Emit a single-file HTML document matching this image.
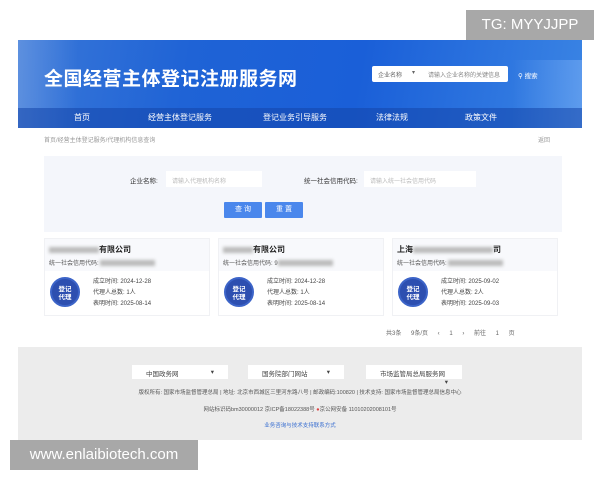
<!DOCTYPE html>
<html><head><meta charset="utf-8"><style>
*{margin:0;padding:0;box-sizing:border-box}
body{width:600px;height:480px;background:#fff;position:relative;overflow:hidden;font-family:"Liberation Sans","Noto Sans CJK SC",sans-serif;color:#333}
.abs{position:absolute}
.hdr{left:18px;top:40px;width:564px;height:88px;background:linear-gradient(100deg,#3a78d8 0%,#1f63d6 30%,#1a5fd8 60%,#3a84e4 100%);overflow:hidden}
.nav{left:0;top:68px;width:564px;height:20px;background:rgba(20,70,170,.55)}
.nav span{position:absolute;top:4px;color:#fff;font-size:8px}
.title{left:26px;top:24px;color:#fff;font-size:19px;font-weight:bold;letter-spacing:.5px}
.sbox{left:354px;top:26px;width:136px;height:16px;background:#fff;border-radius:2px;font-size:6px;color:#666}
.small{font-size:6px;color:#999}
.panel{left:44px;top:156px;width:518px;height:76px;background:#f4f6fb}
.inp{background:#fff;height:16px;font-size:6px;color:#bbb;padding:5px 6px}
.btn{height:16px;width:38px;background:#4a87ec;color:#fff;font-size:7px;text-align:center;line-height:16px;border-radius:1px}
.card{top:238px;width:166px;height:78px;background:#fff;border:1px solid #f0f1f4}
.card .top{height:32px;background:#f8f9fc;padding:5px 4px}
.card b{font-size:8px;color:#222;display:block}
.card .c{font-size:6px;color:#555;margin-top:3px}
.badge{position:absolute;left:5px;top:38px;width:30px;height:30px;border-radius:50%;background:#2d4fb0;color:#fff;font-size:6.5px;font-weight:bold;text-align:center;line-height:8px;padding-top:7px;border:2px solid #3c64c8}
.info{position:absolute;left:48px;top:38px;font-size:6px;color:#444;line-height:11px}
.blur{display:inline-block;height:6px;background:#bbb;filter:blur(1.5px);vertical-align:middle}
.foot{left:18px;top:347px;width:564px;height:93px;background:#ececec}
.sel{top:18px;height:14px;width:96px;background:#fff;font-size:6.5px;color:#444;padding:3px 14px}
.ft{font-size:5.5px;color:#555;text-align:center;width:564px;left:0}
.wm{background:#a8a8a8;color:#fff;font-size:15px}
</style></head><body>
<div class="abs hdr">
 <div class="abs" style="left:0;top:0;width:60px;height:88px;background:linear-gradient(90deg,rgba(255,255,255,.18),rgba(255,255,255,0))"></div>
 <div class="abs" style="right:0;top:20px;width:70px;height:68px;background:linear-gradient(90deg,rgba(255,255,255,0),rgba(160,200,255,.35))"></div>
 <div class="abs title">全国经营主体登记注册服务网</div>
 <div class="abs sbox"><span class="abs" style="left:6px;top:4px">企业名称</span><span class="abs" style="left:40px;top:3px">▾</span><span class="abs" style="left:56px;top:4px;color:#888">请输入企业名称的关键信息</span></div>
 <div class="abs" style="left:500px;top:30px;color:#fff;font-size:6.5px">⚲ 搜索</div>
 <div class="abs nav"><span style="left:56px">首页</span><span style="left:130px">经营主体登记服务</span><span style="left:245px">登记业务引导服务</span><span style="left:358px">法律法规</span><span style="left:447px">政策文件</span></div>
</div>
<div class="abs small" style="left:44px;top:135px">首页/经营主体登记服务/代理机构信息查询</div>
<div class="abs small" style="left:538px;top:135px">返回</div>
<div class="abs panel">
 <div class="abs" style="left:86px;top:19px;font-size:6.5px;color:#333">企业名称:</div>
 <div class="abs inp" style="left:122px;top:15px;width:96px">请输入代理机构名称</div>
 <div class="abs" style="left:260px;top:19px;font-size:6.5px;color:#333">统一社会信用代码:</div>
 <div class="abs inp" style="left:320px;top:15px;width:112px">请输入统一社会信用代码</div>
 <div class="abs btn" style="left:180px;top:46px">查 询</div>
 <div class="abs btn" style="left:221px;top:46px">重 置</div>
</div>
<div class="abs card" style="left:44px"><div class="top"><b><span class="blur" style="width:50px"></span>有限公司</b><div class="c">统一社会信用代码: <span class="blur" style="width:55px"></span></div></div><div class="badge">登记<br>代理</div><div class="info">成立时间: 2024-12-28<br>代理人总数: 1人<br>表明时间: 2025-08-14</div></div>
<div class="abs card" style="left:218px"><div class="top"><b><span class="blur" style="width:30px"></span>有限公司</b><div class="c">统一社会信用代码: 9<span class="blur" style="width:55px"></span></div></div><div class="badge">登记<br>代理</div><div class="info">成立时间: 2024-12-28<br>代理人总数: 1人<br>表明时间: 2025-08-14</div></div>
<div class="abs card" style="left:392px"><div class="top"><b>上海<span class="blur" style="width:80px"></span>司</b><div class="c">统一社会信用代码: <span class="blur" style="width:55px"></span></div></div><div class="badge">登记<br>代理</div><div class="info">成立时间: 2025-09-02<br>代理人总数: 2人<br>表明时间: 2025-09-03</div></div>
<div class="abs small" style="left:386px;top:328px;color:#666;word-spacing:8px">共3条 9条/页 ‹ 1 › 前往 1 页</div>
<div class="abs foot">
 <div class="abs sel" style="left:114px">中国政务网 <span style="float:right">▾</span></div>
 <div class="abs sel" style="left:230px">国务院部门网站 <span style="float:right">▾</span></div>
 <div class="abs sel" style="left:348px">市场监管局总局服务网 <span style="float:right">▾</span></div>
 <div class="abs ft" style="top:41px">版权所有: 国家市场监督管理总局 | 地址: 北京市西城区三里河东路八号 | 邮政编码:100820 | 技术支持: 国家市场监督管理总局信息中心</div>
 <div class="abs ft" style="top:58px">网站标识码bm30000012 京ICP备18022388号 <span style="color:#d44">●</span>京公网安备 11010202008101号</div>
 <div class="abs ft" style="top:74px;color:#3a6fd0">业务咨询与技术支持联系方式</div>
</div>
<div class="abs wm" style="left:466px;top:10px;width:128px;height:30px;line-height:30px;text-align:center">TG: MYYJJPP</div>
<div class="abs wm" style="left:10px;top:440px;width:188px;height:30px;line-height:30px;text-align:center">www.enlaibiotech.com</div>
</body></html>
